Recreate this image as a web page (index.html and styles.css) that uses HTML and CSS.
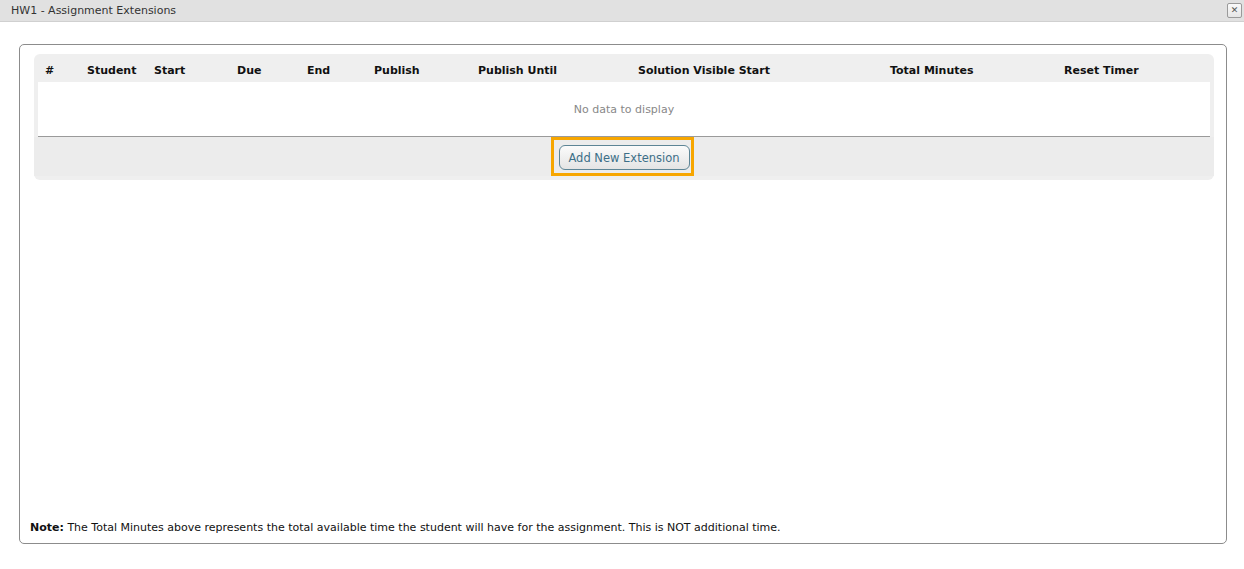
FILE: index.html
```html
<!DOCTYPE html>
<html>
<head>
    <link rel="stylesheet" href="styles.css">
</head>
<body>
    <div class="titlebar">
        <span class="title">HW1 - Assignment Extensions</span>
        <span class="close">&#x2715;</span>
    </div>
    <div class="panel">
        <div class="grid">
            <div class="grid-head">
                <div>#</div>
                <div>Student</div>
                <div>Start</div>
                <div>Due</div>
                <div>End</div>
                <div>Publish</div>
                <div>Publish Until</div>
                <div>Solution Visible Start</div>
                <div>Total Minutes</div>
                <div>Reset Timer</div>
            </div>
            <div class="grid-body">No data to display</div>
            <div class="grid-foot">
                <div class="focus-ring">
                    <button class="btn">Add New Extension</button>
                </div>
            </div>
        </div>
        <p class="note"><b>Note:</b> The Total Minutes above represents the total available time the student will have for the assignment. This is NOT additional time.</p>
    </div>
</body>
</html>
```

FILE: styles.css
```css
body{
    margin: 0;
    background: #fff;
    font-family: "DejaVu Sans", Verdana, sans-serif;
    font-size: 11px;
    color: #222;
}
.titlebar{
    height: 21px;
    background: #e1e1e1;
    border-bottom: 1px solid #d0d0d0;
    display: flex;
    align-items: center;
    justify-content: space-between;
    padding: 0 2px 0 11px;
}
.title{
    color: #333;
    font-size: 11px;
}
.close{
    width: 13px;
    height: 13px;
    border: 1px solid #9a9a9a;
    border-radius: 2px;
    background: linear-gradient(#fafafa, #e6e6e6);
    color: #555;
    font-size: 9px;
    line-height: 13px;
    text-align: center;
    margin-top: -1px;
}
.panel{
    margin: 22px 17px 0 19px;
    height: 498px;
    border: 1px solid #8c8c8c;
    border-radius: 5px;
    display: flex;
    flex-direction: column;
}
.grid{
    margin: 9px 12px 0 14px;
    background: #efefef;
    border-radius: 6px;
    padding: 0 4px 4px 4px;
}
.grid-head{
    display: grid;
    grid-template-columns: 42px 67px 83px 70px 67px 104px 160px 252px 174px 1fr;
    padding: 5px 0 0 7px;
    height: 23px;
    align-items: center;
    font-weight: bold;
    color: #111;
    font-size: 11px;
}
.grid-body{
    background: #fff;
    height: 54px;
    border-bottom: 1px solid #9a9a9a;
    display: flex;
    align-items: center;
    justify-content: center;
    color: #888;
}
.grid-foot{
    display: flex;
    justify-content: center;
    background: #ececec;
    margin: 0 -4px;
    height: 39px;
}
.focus-ring{
    border: 3px solid #f7a600;
    padding: 5px 1px 3px 5px;
    margin-right: 4px;
}
.btn{
    height: 25px;
    width: 131px;
    border: 1px solid #5d8596;
    border-radius: 6px;
    background: linear-gradient(#fbfbfb, #e4e4e4);
    color: #3d6f88;
    font-family: inherit;
    font-size: 11.5px;
    padding: 0;
}
.note{
    margin: auto 0 9px 10px;
    color: #111;
}
```
